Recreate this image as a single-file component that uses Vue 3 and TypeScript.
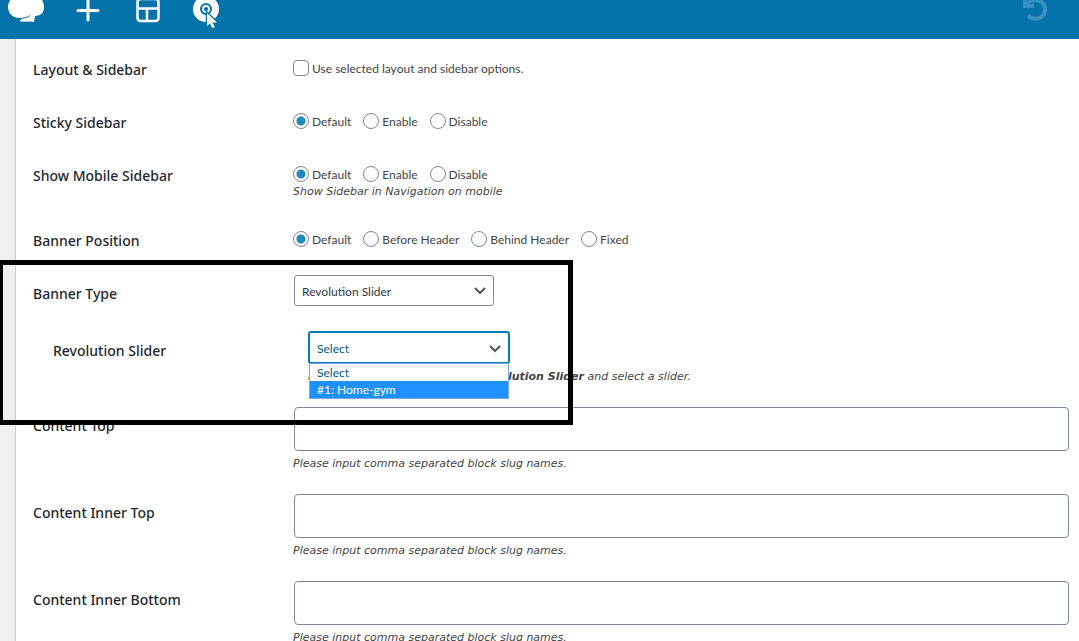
<script setup lang="ts">
import { ref } from 'vue'

interface RadioRow {
  id: string
  label: string
  options: string[]
  hint?: string
}

const radioRows: RadioRow[] = [
  { id: 'sticky', label: 'Sticky Sidebar', options: ['Default', 'Enable', 'Disable'] },
  { id: 'mobile', label: 'Show Mobile Sidebar', options: ['Default', 'Enable', 'Disable'], hint: 'Show Sidebar in Navigation on mobile' },
  { id: 'position', label: 'Banner Position', options: ['Default', 'Before Header', 'Behind Header', 'Fixed'] }
]

const blockRows = [
  { id: 'content-top', label: 'Content Top' },
  { id: 'content-inner-top', label: 'Content Inner Top' },
  { id: 'content-inner-bottom', label: 'Content Inner Bottom' }
]

const picked = ref<Record<string, string>>({ sticky: 'Default', mobile: 'Default', position: 'Default' })
const useLayout = ref(false)
const bannerType = ref('Revolution Slider')
const slider = ref('Select')
const sliders = ['Select', '#1: Home-gym']
const highlighted = ref(1)
</script>

<template>
  <div class="page">
    <header class="bar">
      <button type="button" class="tool" aria-label="Presets">
        <svg width="40" height="39" viewBox="0 0 40 39">
          <path fill="#fff" d="M2 7C2 2 5-4 14-4h14c7-1 10 6 10 12 0 5-4 8-9 8l-1 6-3-.6-10 .4-1-1c1-2 3-2.500 5-3-3 .5-6 .4-9-.4C6 17 2 12 2 7z" />
          <path fill="none" stroke="#0473aa" stroke-width="1" d="M17 18c3-.3 5-1 7-2.500" />
        </svg>
      </button>
      <button type="button" class="tool" aria-label="Add element">
        <svg width="40" height="39" viewBox="0 0 40 39">
          <path stroke="#fff" stroke-width="3" stroke-linecap="round" d="M10 10.500h20M20 0v20" />
        </svg>
      </button>
      <button type="button" class="tool" aria-label="Templates">
        <svg width="40" height="39" viewBox="0 0 40 39">
          <rect x="9.500" y="-1" width="21" height="22" rx="3" fill="none" stroke="#fff" stroke-width="2.500" />
          <path stroke="#fff" stroke-width="2.500" d="M10 8.500h20M19 8.500V21" />
        </svg>
      </button>
      <button type="button" class="tool" aria-label="Target">
        <svg width="40" height="39" viewBox="0 0 40 39">
          <circle cx="18" cy="9" r="9.500" fill="none" stroke="#fff" stroke-width="7" />
          <circle cx="18" cy="9" r="3" fill="none" stroke="#fff" stroke-width="1.800" />
          <path fill="#fff" stroke="#0473aa" stroke-width="2.500" paint-order="stroke" d="M19 13v13l3-2.500 2.300 4.800 2.500-1.200-2.300-4.600h4.500z" />
        </svg>
      </button>
      <button type="button" class="tool undo" aria-label="Undo" disabled>
        <svg width="40" height="39" viewBox="0 0 40 39">
          <path fill="none" stroke="#3a90be" stroke-width="4" d="M10 3c7-6 17-2 17 6.500S17 22 10 15.500" />
          <path fill="#3a90be" d="M5-3h3l2 7h6v4H5z" />
        </svg>
      </button>
    </header>

    <main class="panel">
      <form class="form" @submit.prevent>
        <div class="row">
          <span class="label">Layout &amp; Sidebar</span>
          <div class="choices">
            <label class="choice"><input v-model="useLayout" type="checkbox" class="tick"><span class="text">Use selected layout and sidebar options.</span></label>
          </div>
        </div>

        <div v-for="row in radioRows" :key="row.id" class="row" role="radiogroup" :aria-labelledby="row.id + '-label'">
          <span :id="row.id + '-label'" class="label">{{ row.label }}</span>
          <div>
            <div class="choices" :class="{ tight: row.hint }">
              <label v-for="option in row.options" :key="option" class="choice">
                <input v-model="picked[row.id]" type="radio" class="radio" :name="row.id" :value="option"><span class="text">{{ option }}</span>
              </label>
            </div>
            <p v-if="row.hint" class="hint">{{ row.hint }}</p>
          </div>
        </div>

        <div class="row">
          <label class="label" for="banner-type">Banner Type</label>
          <div class="picker">
            <select id="banner-type" v-model="bannerType" class="select">
              <option>Revolution Slider</option>
            </select>
            <svg class="chevron" width="12" height="8" viewBox="0 0 12 8"><path d="M1 1l5 5 5-5" /></svg>
          </div>
        </div>

        <div class="row nested">
          <label class="label" for="slider">Revolution Slider</label>
          <div>
            <div class="picker open">
              <select id="slider" v-model="slider" class="select">
                <option v-for="item in sliders" :key="item">{{ item }}</option>
              </select>
              <svg class="chevron" width="12" height="8" viewBox="0 0 12 8"><path d="M1 1l5 5 5-5" /></svg>
              <ul class="list" role="listbox" aria-label="Revolution Slider">
                <li v-for="(item, i) in sliders" :key="item" role="option" class="item" :class="{ active: i === highlighted }" :aria-selected="item === slider" @mouseenter="highlighted = i">{{ item }}</li>
              </ul>
            </div>
            <p class="hint spaced">Please select <strong>Banner Type</strong> to <strong>Revolution Slider</strong> and select a slider.</p>
          </div>
        </div>

        <div v-for="row in blockRows" :key="row.id" class="row">
          <label class="label" :for="row.id">{{ row.label }}</label>
          <div class="block">
            <textarea :id="row.id" class="area" rows="1"></textarea>
            <p class="hint spaced">Please input comma separated block slug names.</p>
          </div>
        </div>
      </form>
    </main>

    <div class="marker" aria-hidden="true"></div>
  </div>
</template>

<style>
body {
  margin: 0;
}
</style>

<style scoped>
* {
  box-sizing: border-box;
}
.page {
  position: relative;
  display: flex;
  flex-direction: column;
  height: 100vh;
  overflow: hidden;
  background: #f0f0f0;
  color: #444;
  font: 12px/18px Lato, "Open Sans", sans-serif;
}
.bar {
  display: flex;
  flex: none;
  gap: 20px;
  height: 39px;
  padding: 0 21px 0 6px;
  background: #0473aa;
}
.tool {
  width: 40px;
  height: 39px;
  padding: 0;
  border: 0;
  background: none;
}
.tool:first-child {
  margin-right: 2px;
}
.tool svg {
  display: block;
}
.undo {
  margin-left: auto;
}
.panel {
  flex: 1;
  min-height: 0;
  margin-left: 15px;
  padding: 12px 10px 0 17px;
  border-left: 1px solid #ccc;
  background: #fff;
}
.row {
  display: grid;
  grid-template-columns: 260px minmax(0, 1fr);
  padding-bottom: 23px;
}
.label {
  padding-top: 10px;
  color: #23282d;
  font-family: "Noto Sans", "Open Sans", sans-serif;
  font-size: 14px;
  font-weight: 500;
}
.nested {
  grid-template-columns: 255px minmax(0, 1fr);
  padding-left: 20px;
}
.nested .label {
  padding-top: 11px;
}
.choices {
  display: flex;
  flex-wrap: wrap;
  gap: 12px;
  padding: 8px 0 4px;
}
.tight {
  padding-bottom: 0;
}
.choice {
  display: flex;
  align-items: center;
  gap: 3px;
  height: 18px;
}
.text {
  padding-top: 2px;
}
.tick,
.radio {
  appearance: none;
  flex: none;
  width: 16px;
  height: 16px;
  margin: 0;
  border: 1px solid #7e8993;
  border-radius: 4px;
  background: #fff;
}
.radio {
  border-radius: 50%;
}
.radio:checked {
  background: radial-gradient(circle, #1e8cbe 4px, #fff 5px);
}
.hint {
  margin: 0;
  font: italic 11px/18px "DejaVu Sans", sans-serif;
  height: 16px;
}
.spaced {
  margin-top: 4px;
}
.picker {
  position: relative;
  width: 200px;
  margin: 0 0 2px 1px;
}
.select {
  display: block;
  appearance: none;
  width: 100%;
  height: 31px;
  padding: 2px 24px 0 7px;
  border: 1px solid #7e8993;
  border-radius: 3px;
  background: #fff;
  color: #32373c;
  font: inherit;
}
.chevron {
  position: absolute;
  top: 12px;
  right: 8px;
  fill: none;
  stroke: #555;
  stroke-width: 2;
}
.open {
  width: 202px;
  margin: 0;
}
.open .select {
  height: 33px;
  border: 2px solid #007cba;
  color: #016087;
}
.open .chevron {
  top: 14px;
  right: 9px;
}
.list {
  position: absolute;
  top: 32px;
  left: 1px;
  right: 1px;
  margin: 0;
  padding: 0;
  border: 1px solid #7aa5e3;
  background: #fff;
  color: #016087;
  line-height: 17px;
  list-style: none;
}
.item {
  padding: 0 7px;
}
.active {
  background: #1e90ff;
  color: #fff;
}
.block {
  min-width: 0;
}
.area {
  display: block;
  width: calc(100% - 1px);
  height: 44px;
  margin: 0 0 0 1px;
  padding: 4px 8px;
  border: 1px solid #7e8993;
  border-radius: 4px;
  background: #fff;
  font: inherit;
  resize: none;
}
.marker {
  position: absolute;
  top: 260px;
  left: -2px;
  width: 575px;
  height: 165px;
  border: 5px solid #000;
  pointer-events: none;
}
</style>
